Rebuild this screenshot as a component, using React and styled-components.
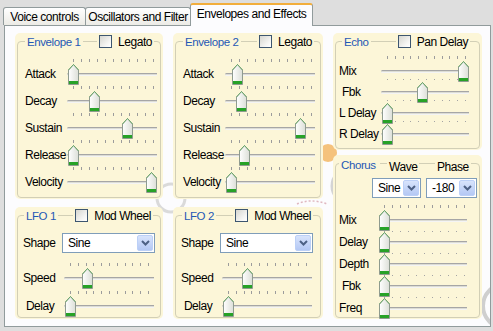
import React from 'react';
import styled, { createGlobalStyle } from 'styled-components';

const CREAM = '#fcf6d8';

const Global = createGlobalStyle`
  html, body { margin: 0; padding: 0; }
  body {
    background: #dedede;
    font-family: "Liberation Sans", Arial, sans-serif;
    font-size: 12px;
    letter-spacing: -0.45px;
    color: #000;
  }
`;

const Window = styled.div`
  width: 493px;
  height: 331px;
  overflow: hidden;
  background: #dedede;
  display: flex;
  flex-direction: column;
`;

const TabBar = styled.div`
  position: relative;
  z-index: 2;
  height: 25px;
  display: flex;
  align-items: flex-end;
  padding-left: 3px;
`;

const Tab = styled.div`
  box-sizing: border-box;
  width: ${p => p.$w}px;
  height: 18px;
  margin-left: ${p => (p.$first ? 0 : -1)}px;
  display: flex;
  align-items: center;
  justify-content: center;
  border: 1px solid #919b9c;
  border-bottom: none;
  border-radius: 3px 3px 0 0;
  background: linear-gradient(#ffffff, #ecebe6);
  white-space: nowrap;
`;

const ActiveTab = styled(Tab)`
  height: 23px;
  margin-bottom: -1px;
  padding-bottom: 3px;
  border-top: 2px solid #f2ae3c;
  background: #fcfcfe;
  position: relative;
  z-index: 3;
`;

const Panel = styled.div`
  position: relative;
  margin-left: 4px;
  width: 487px;
  height: 302px;
  box-sizing: border-box;
  border: 1px solid #919b9c;
  background: #fcfcfe;
`;

const Decor = styled.svg`
  position: absolute;
  left: 0;
  top: 0;
  width: 485px;
  height: 300px;
  z-index: 0;
`;

const Grid = styled.div`
  position: relative;
  z-index: 1;
  display: grid;
  grid-template-columns: 148px 150px 149px;
  grid-template-rows: 166px 112px;
  column-gap: 10px;
  row-gap: 8px;
  padding: 7px 0 0 10px;
`;

const Column = styled.div`
  grid-column: 3;
  grid-row: 1 / span 2;
  display: flex;
  flex-direction: column;
  gap: 5px;
`;

const Group = styled.div`
  position: relative;
  box-sizing: border-box;
  height: ${p => (p.$h ? `${p.$h}px` : '100%')};
  flex: ${p => (p.$grow ? 1 : 'none')};
  background: ${CREAM};
  border-radius: 5px;
  padding-left: ${p => p.$pl}px;
  display: flex;
  flex-direction: column;
  &::before {
    content: '';
    position: absolute;
    left: 2px;
    right: 2px;
    top: 8px;
    bottom: 1px;
    border: 1px solid #d2cfb6;
    border-radius: 4px;
    pointer-events: none;
  }
`;

const Header = styled.div`
  position: relative;
  height: 17px;
  display: flex;
  align-items: center;
`;

const Title = styled.span`
  color: #1f58b5;
  background: ${CREAM};
  padding: 0 2px;
  margin-left: ${p => p.$ml || 0}px;
  font-size: 11.5px;
  letter-spacing: -0.4px;
`;

const HeaderCheck = styled.label`
  margin-left: auto;
  margin-right: ${p => p.$mr}px;
  display: flex;
  align-items: center;
  gap: 6px;
  padding: 0 2px;
  background: ${CREAM};
`;

const Box = styled.span`
  width: 13px;
  height: 13px;
  box-sizing: border-box;
  border: 1px solid #3d5670;
  background: linear-gradient(135deg, #d6d6d0, #f6f6f4 70%, #ffffff);
`;

const ChorusHeader = styled.div`
  position: relative;
  height: 17px;
  display: grid;
  grid-template-columns: 48px 48px 1fr;
  align-items: center;
  justify-items: start;
`;

const HeaderText = styled.span`
  background: ${CREAM};
  padding: 0 2px;
  margin-top: ${p => p.$mt || 0}px;
`;

const Rows = styled.div`
  display: flex;
  flex-direction: column;
  gap: ${p => p.$gap || 0}px;
  margin-top: ${p => p.$mt || 0}px;
`;

const Row = styled.div`
  display: flex;
  align-items: flex-end;
`;

const Label = styled.span`
  flex: none;
  width: ${p => p.$w}px;
  height: 20px;
  line-height: 20px;
  white-space: nowrap;
`;

const SliderBox = styled.div`
  flex: none;
  width: ${p => p.$w}px;
  display: flex;
  flex-direction: column;
`;

const Ticks = styled.div`
  height: 7px;
  box-sizing: border-box;
  width: ${p => p.$start + p.$range + 1}px;
  padding-left: ${p => p.$start}px;
  display: flex;
  justify-content: space-between;
  align-items: center;
`;

const Tick = styled.span`
  width: 1px;
  height: 3px;
  background: #9c9c9c;
`;

const ThumbArea = styled.div`
  position: relative;
  height: 20px;
`;

const Track = styled.div`
  margin-top: 9px;
  height: 3px;
  box-sizing: border-box;
  border-top: 1px solid #a6a6a6;
  border-bottom: 1px solid #f4f4f4;
  background: #dcdcd4;
  border-radius: 2px 0 0 2px;
`;

const Dots = styled.div`
  position: absolute;
  top: ${p => p.$top}px;
  left: ${p => p.$start}px;
  width: ${p => p.$range + 1}px;
  display: flex;
  justify-content: space-between;
`;

const Dot = styled.span`
  width: 1px;
  height: 1px;
  background: #a4a4a4;
`;

const ThumbSvg = styled.svg`
  position: absolute;
  top: 0;
  display: block;
`;

const Thumb = ({ left }) => (
  <ThumbSvg width="11" height="21" viewBox="0 0 11 21" style={{ left }}>
    <defs>
      <linearGradient id="thumbfill" x1="0" y1="0" x2="1" y2="0">
        <stop offset="0" stopColor="#ffffff" />
        <stop offset="1" stopColor="#dcdfd8" />
      </linearGradient>
    </defs>
    <path d="M0.5 6 L5.5 0.5 L10.5 6 V20.5 H0.5 Z" fill="url(#thumbfill)" stroke="#8f9b8f" />
    <path d="M0.5 6 L5.5 0.5 L10.5 6" fill="none" stroke="#68a868" />
    <rect x="1" y="17" width="9" height="3" fill="#27a227" />
  </ThumbSvg>
);

const Slider = ({ value, w, start, range, ticks = true, dotsTop }) => {
  const n = Array.from({ length: 11 });
  return (
    <SliderBox $w={w}>
      {ticks && (
        <Ticks $start={start} $range={range}>
          {n.map((_, i) => <Tick key={i} />)}
        </Ticks>
      )}
      <ThumbArea>
        <Track />
        {dotsTop != null && (
          <Dots $top={dotsTop} $start={start} $range={range}>
            {n.map((_, i) => <Dot key={i} />)}
          </Dots>
        )}
        <Thumb left={start - 5 + value * range} />
      </ThumbArea>
    </SliderBox>
  );
};

const Combo = styled.div`
  box-sizing: border-box;
  width: ${p => p.$w}px;
  height: 20px;
  border: 1px solid #7f9db9;
  background: #fff;
  display: flex;
  align-items: center;
  padding: 1px;
`;

const ComboText = styled.span`
  flex: 1;
  padding-left: 4px;
`;

const DropBtn = styled.span`
  width: 16px;
  height: 16px;
  box-sizing: border-box;
  border: 1px solid #bcd0f7;
  border-radius: 2px;
  background: linear-gradient(#d8e4fc, #b4c8f4);
  display: flex;
  align-items: center;
  justify-content: center;
`;

const ComboBox = ({ w, text }) => (
  <Combo $w={w}>
    <ComboText>{text}</ComboText>
    <DropBtn>
      <svg width="9" height="6" viewBox="0 0 9 6">
        <path d="M1 1 L4.5 4.5 L8 1" fill="none" stroke="#4d6185" strokeWidth="2" />
      </svg>
    </DropBtn>
  </Combo>
);

const ShapeRow = styled.div`
  display: flex;
  align-items: center;
  margin-top: 9px;
`;

const ComboRow = styled.div`
  display: flex;
  justify-content: flex-end;
  gap: 5px;
  padding-right: 5px;
  margin-top: 6px;
`;

const ENV = { w: 90, start: 6, range: 80 };
const LFO = { w: 90, start: 6, range: 78 };
const ECHO = { w: 88, start: 6, range: 78 };
const CHORUS = { w: 88, start: 5, range: 80 };

const EnvelopeGroup = ({ n, values }) => (
  <Group $pl={10}>
    <Header>
      <Title>Envelope {n}</Title>
      <HeaderCheck $mr={9}>
        <Box />
        Legato
      </HeaderCheck>
    </Header>
    <Rows $mt={7}>
      {['Attack', 'Decay', 'Sustain', 'Release', 'Velocity'].map((l, i) => (
        <Row key={l}>
          <Label $w={42}>{l}</Label>
          <Slider value={values[i]} {...ENV} />
        </Row>
      ))}
    </Rows>
  </Group>
);

const LfoGroup = ({ n, speed }) => (
  <Group $pl={8}>
    <Header>
      <Title $ml={1}>LFO {n}</Title>
      <HeaderCheck $mr={10}>
        <Box />
        Mod Wheel
      </HeaderCheck>
    </Header>
    <ShapeRow>
      <Label $w={39}>Shape</Label>
      <ComboBox w={93} text="Sine" />
    </ShapeRow>
    <Rows $mt={8} $gap={1}>
      <Row>
        <Label $w={41}>Speed</Label>
        <Slider value={speed} {...LFO} />
      </Row>
      <Row>
        <Label $w={41}>&nbsp;Delay</Label>
        <Slider value={0} {...LFO} />
      </Row>
    </Rows>
  </Group>
);

const EchoGroup = () => {
  const items = [
    ['Mix', 0.98, true, 18],
    ['\u00a0Fbk', 0.455, false, 18],
    ['L Delay', 0, false, 18],
    ['R Delay', 0, false, null],
  ];
  return (
    <Group $pl={6} $h={117}>
      <Header>
        <Title $ml={3}>Echo</Title>
        <HeaderCheck $mr={12}>
          <Box />
          Pan Delay
        </HeaderCheck>
      </Header>
      <Rows $mt={4} $gap={1}>
        {items.map(([l, v, t, d]) => (
          <Row key={l}>
            <Label $w={42}>{l}</Label>
            <Slider value={v} ticks={t} dotsTop={d} {...ECHO} />
          </Row>
        ))}
      </Rows>
    </Group>
  );
};

const ChorusGroup = () => {
  const items = [
    ['Mix', true, 21],
    ['Delay', false, 21],
    ['Depth', false, 21],
    ['\u00a0Fbk', false, 21],
    ['Freq', false, null],
  ];
  return (
    <Group $pl={6} $grow>
      <ChorusHeader>
        <HeaderText>
          <Title $ml={-2}>Chorus</Title>
        </HeaderText>
        <HeaderText $mt={5}>Wave</HeaderText>
        <HeaderText $mt={5}>Phase</HeaderText>
      </ChorusHeader>
      <ComboRow>
        <ComboBox w={49} text="Sine" />
        <ComboBox w={51} text="-180" />
      </ComboRow>
      <Rows $mt={5} $gap={2}>
        {items.map(([l, t, d]) => (
          <Row key={l}>
            <Label $w={40}>{l}</Label>
            <Slider value={0} ticks={t} dotsTop={d} {...CHORUS} />
          </Row>
        ))}
      </Rows>
    </Group>
  );
};

export default function App() {
  return (
    <>
      <Global />
      <Window>
        <TabBar>
          <Tab $first $w={83}>Voice controls</Tab>
          <Tab $w={106}>Oscillators and Filter</Tab>
          <ActiveTab $w={123}>Envelopes and Effects</ActiveTab>
        </TabBar>
        <Panel>
          <Decor viewBox="0 0 485 300">
            <circle cx="323" cy="127" r="9" fill="#f5c27c" />
            <circle cx="345" cy="160" r="18" fill="none" stroke="#d4d4d4" strokeWidth="3" />
            <path d="M292 178 q14 -6 30 0" fill="none" stroke="#e0b8c0" strokeWidth="1.5" strokeDasharray="2 2" />
            <circle cx="500" cy="280" r="22" fill="none" stroke="#cfcfcf" strokeWidth="4" />
            <circle cx="166" cy="172" r="14" fill="none" stroke="#dadada" strokeWidth="3" />
          </Decor>
          <Grid>
            <EnvelopeGroup n={1} values={[0, 0.26, 0.68, 0, 0.98]} />
            <EnvelopeGroup n={2} values={[0.07, 0.12, 0.86, 0.16, 0]} />
            <Column>
              <EchoGroup />
              <ChorusGroup />
            </Column>
            <LfoGroup n={1} speed={0.22} />
            <LfoGroup n={2} speed={0.24} />
          </Grid>
        </Panel>
      </Window>
    </>
  );
}
